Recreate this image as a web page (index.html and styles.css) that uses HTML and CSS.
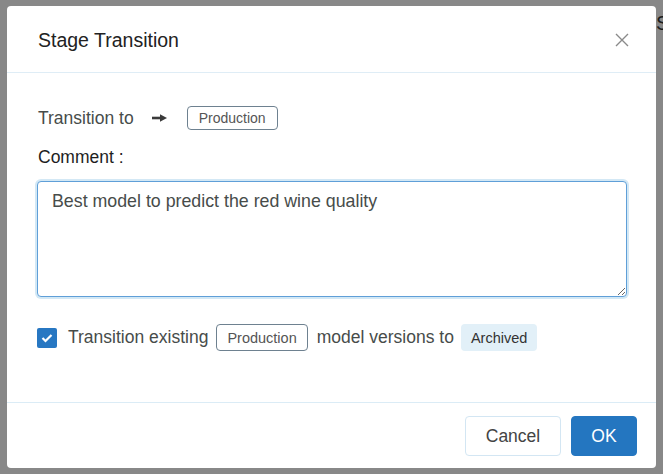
FILE: index.html
```html
<!DOCTYPE html>
<html lang="en">
<head>
<meta charset="utf-8">
<title>Stage Transition</title>
<link rel="stylesheet" href="styles.css">
</head>
<body>
<span class="backdrop-text">S</span>
<div class="modal">
  <div class="modal-header">
    <div class="modal-title">Stage Transition</div>
    <svg class="close" width="14" height="14" viewBox="0 0 14 14"><path d="M1 1 L13 13 M13 1 L1 13" stroke="#8a8a8a" stroke-width="1.4" fill="none"/></svg>
  </div>
  <div class="modal-body">
    <div class="row-to">
      <span class="label">Transition to</span>
      <svg class="arrow" width="15" height="10" viewBox="0 0 15 10"><path d="M0 5 H9" stroke="#3a3a3a" stroke-width="2.6"/><path d="M8 1.3 L15 5 L8 8.7 Z" fill="#3a3a3a"/></svg>
      <span class="tag tag-outline">Production</span>
    </div>
    <div class="comment-label">Comment :</div>
    <textarea class="comment" rows="4">Best model to predict the red wine quality</textarea>
    <div class="row-check">
      <span class="checkbox"><svg width="12" height="10" viewBox="0 0 12 10"><path d="M1.5 5 L4.5 8 L10.5 2" stroke="#fff" stroke-width="2.2" fill="none"/></svg></span>
      <span class="label">Transition existing</span>
      <span class="tag tag-outline tag-tall">Production</span>
      <span class="label">model versions to</span>
      <span class="tag tag-fill">Archived</span>
    </div>
  </div>
  <div class="modal-footer">
    <button class="btn btn-default">Cancel</button>
    <button class="btn btn-primary">OK</button>
  </div>
</div>
</body>
</html>
```

FILE: styles.css
```css
html, body {
  margin: 0;
  height: 100%;
}
body {
  position: relative;
  box-sizing: border-box;
  width: 663px;
  height: 474px;
  padding: 6px 7px 6px 7px;
  background: #888888;
  font-family: "Liberation Sans", Arial, sans-serif;
  overflow: hidden;
}
.backdrop-text {
  position: absolute;
  left: 656px;
  top: 12px;
  font-size: 20px;
  color: #1c1c1c;
  z-index: 0;
}
.modal {
  position: relative;
  z-index: 1;
  box-sizing: border-box;
  width: 649px;
  height: 462px;
  background: #fff;
  border-radius: 4px;
  display: flex;
  flex-direction: column;
}
.modal-header {
  box-sizing: border-box;
  height: 67px;
  border-bottom: 1px solid #dfedf6;
  display: flex;
  align-items: center;
  justify-content: space-between;
  padding: 0 27px 0 31px;
}
.modal-title {
  font-size: 19.5px;
  color: #222;
  margin-top: 2px;
}
.close {
  display: block;
  margin-top: 2px;
}
.modal-body {
  flex: 1;
  padding: 33px 29px 0 30px;
  display: flex;
  flex-direction: column;
}
.label {
  font-size: 17.5px;
  color: #474c4a;
}
.row-to {
  display: flex;
  align-items: center;
  height: 24px;
  padding-left: 1px;
}
.arrow {
  display: block;
  margin: 0 20px 0 18px;
}
.tag {
  box-sizing: border-box;
  display: inline-flex;
  align-items: center;
  font-size: 14px;
  border-radius: 4px;
  padding: 0 11px;
  white-space: nowrap;
}
.tag-outline {
  height: 24px;
  border: 1px solid #6e8190;
  color: #555;
}
.tag-tall {
  height: 27px;
  padding: 0 10px;
  font-size: 14.5px;
  margin: 0 9px 0 8px;
}
.tag-fill {
  height: 27px;
  padding: 0 10px;
  font-size: 14.5px;
  background: #e2f0f8;
  color: #333;
  margin-left: 7px;
}
.comment-label {
  font-size: 17.5px;
  color: #1e1e1e;
  margin-top: 17px;
  padding-left: 1px;
  line-height: 20px;
}
.comment {
  box-sizing: border-box;
  display: block;
  margin-top: 14px;
  width: 590px;
  height: 116px;
  padding: 8px 14px;
  border: 1px solid #5f9fd8;
  border-radius: 4px;
  box-shadow: 0 0 0 2px #d3e8f5;
  font-family: "Liberation Sans", Arial, sans-serif;
  font-size: 17.8px;
  line-height: 22px;
  color: #474c4a;
  outline: none;
  resize: vertical;
}
.row-check {
  display: flex;
  align-items: center;
  margin-top: 27px;
  height: 27px;
}
.checkbox {
  box-sizing: border-box;
  width: 20px;
  height: 20px;
  border-radius: 2px;
  background: #2777c2;
  display: flex;
  align-items: center;
  justify-content: center;
  margin-right: 11px;
}
.checkbox svg {
  display: block;
}
.modal-footer {
  box-sizing: border-box;
  height: 66px;
  border-top: 1px solid #dbecf6;
  display: flex;
  justify-content: flex-end;
  align-items: flex-start;
  gap: 10px;
  padding: 13px 19px 0 0;
}
.btn {
  box-sizing: border-box;
  height: 40px;
  border-radius: 4px;
  font-family: "Liberation Sans", Arial, sans-serif;
  font-size: 17.5px;
  cursor: pointer;
}
.btn-default {
  width: 96px;
  background: #fff;
  border: 1px solid #d3e6f3;
  color: #444;
}
.btn-primary {
  width: 66px;
  background: #2476c0;
  border: 1px solid #2476c0;
  color: #fff;
}
```
